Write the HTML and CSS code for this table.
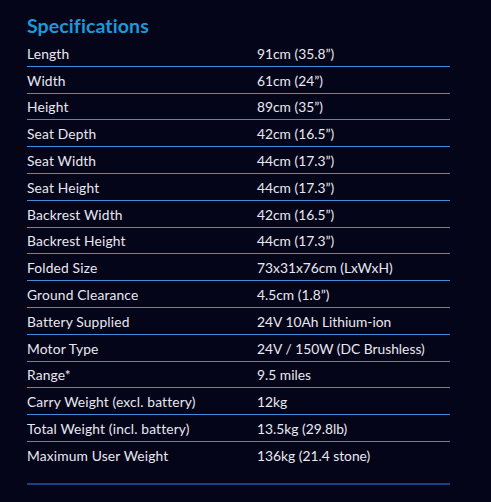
FILE: index.html
```html
<!DOCTYPE html>
<html>
<head>
<meta charset="utf-8">
<link rel="stylesheet" href="styles.css">
</head>
<body>
<section class="specs">
  <h2 class="title">Specifications</h2>
  <div class="table">
    <div class="row"><span class="k">Length</span><span class="v">91cm (35.8”)</span></div>
    <div class="row"><span class="k">Width</span><span class="v">61cm (24”)</span></div>
    <div class="row"><span class="k">Height</span><span class="v">89cm (35”)</span></div>
    <div class="row"><span class="k">Seat Depth</span><span class="v">42cm (16.5”)</span></div>
    <div class="row"><span class="k">Seat Width</span><span class="v">44cm (17.3”)</span></div>
    <div class="row"><span class="k">Seat Height</span><span class="v">44cm (17.3”)</span></div>
    <div class="row"><span class="k">Backrest Width</span><span class="v">42cm (16.5”)</span></div>
    <div class="row"><span class="k">Backrest Height</span><span class="v">44cm (17.3”)</span></div>
    <div class="row"><span class="k">Folded Size</span><span class="v">73x31x76cm (LxWxH)</span></div>
    <div class="row"><span class="k">Ground Clearance</span><span class="v">4.5cm (1.8”)</span></div>
    <div class="row"><span class="k">Battery Supplied</span><span class="v">24V 10Ah Lithium-ion</span></div>
    <div class="row"><span class="k">Motor Type</span><span class="v">24V / 150W (DC Brushless)</span></div>
    <div class="row"><span class="k">Range*</span><span class="v">9.5 miles</span></div>
    <div class="row"><span class="k">Carry Weight (excl. battery)</span><span class="v">12kg</span></div>
    <div class="row"><span class="k">Total Weight (incl. battery)</span><span class="v">13.5kg (29.8lb)</span></div>
    <div class="row last"><span class="k">Maximum User Weight</span><span class="v">136kg (21.4 stone)</span></div>
  </div>
  <div class="endline"></div>
</section>
</body>
</html>
```

FILE: styles.css
```css
html, body {
  margin: 0;
  padding: 0;
  background: #05051a;
}
body {
  width: 491px;
  height: 502px;
  overflow: hidden;
  font-family: Lato, "Noto Sans", sans-serif;
  color: #e8e8f0;
}
.specs {
  padding: 12px 0 0 27px;
  width: 423px;
}
.title {
  margin: 0;
  height: 28px;
  font-size: 19.5px;
  line-height: 28px;
  font-weight: 700;
  color: #1b9ad8;
  letter-spacing: 0.1px;
}
.table {
  display: flex;
  flex-direction: column;
}
.row {
  display: grid;
  grid-template-columns: 230px 1fr;
  box-sizing: border-box;
  height: 26.8px;
  border-bottom: 1px solid #3f8ddb;
  align-items: center;
  font-size: 13.8px;
  padding-top: 1px;
}
.row.last {
  border-bottom: none;
}
.k, .v {
  white-space: nowrap;
}
.k {
  letter-spacing: 0.15px;
}
.endline {
  margin-top: 14px;
  height: 2px;
  background: #1a3f8a;
}
```
